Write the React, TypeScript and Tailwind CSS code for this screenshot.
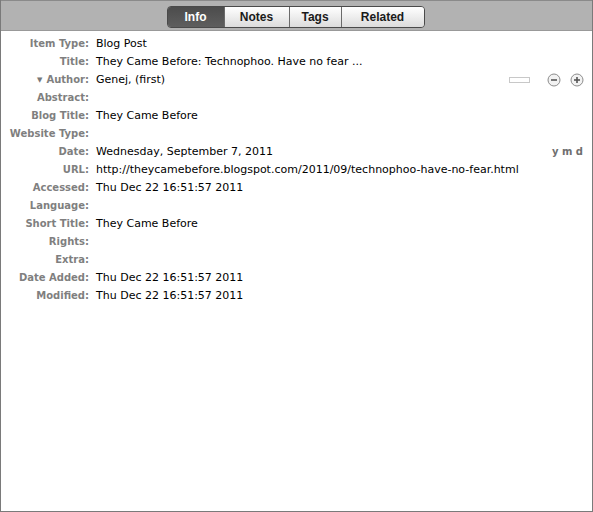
const rows: { label: string; value?: string; author?: boolean; date?: boolean }[] = [
  { label: "Item Type", value: "Blog Post" },
  { label: "Title", value: "They Came Before: Technophoo. Have no fear ..." },
  { label: "Author", value: "Genej, (first)", author: true },
  { label: "Abstract" },
  { label: "Blog Title", value: "They Came Before" },
  { label: "Website Type" },
  { label: "Date", value: "Wednesday, September 7, 2011", date: true },
  { label: "URL", value: "http://theycamebefore.blogspot.com/2011/09/technophoo-have-no-fear.html" },
  { label: "Accessed", value: "Thu Dec 22 16:51:57 2011" },
  { label: "Language" },
  { label: "Short Title", value: "They Came Before" },
  { label: "Rights" },
  { label: "Extra" },
  { label: "Date Added", value: "Thu Dec 22 16:51:57 2011" },
  { label: "Modified", value: "Thu Dec 22 16:51:57 2011" },
];

const tabs = ["Info", "Notes", "Tags", "Related"];
const tabWidths = ["w-[56px]", "w-[65px]", "w-[52px]", "w-[83px]"];

const CircleButton = ({ plus }: { plus?: boolean }) => (
  <svg width="14" height="14" viewBox="0 0 14 14">
    <circle cx="7" cy="7" r="6" fill="#f2f2f2" stroke="#8c8c8c" strokeWidth="1" />
    <path d="M4 7h6" stroke="#555" strokeWidth="1.6" />
    {plus && <path d="M7 4v6" stroke="#555" strokeWidth="1.6" />}
  </svg>
);

const App = () => {
  return (
    <div
      className="w-[593px] h-[512px] flex flex-col bg-white border-x border-b border-[#7a7a7a] overflow-hidden"
      style={{ fontFamily: '"Liberation Sans", Arial, sans-serif' }}
    >
      {/* TOP BAR WITH TABS */}
      <div className="h-[31px] shrink-0 flex justify-center items-start pt-[5px] bg-[#b2b2b2] border-t border-[#8a8a8a] border-b border-b-[#999]">
        <div className="flex h-[22px] rounded-[4px] border border-[#4a4a4a] overflow-hidden ml-[-2px]">
          {tabs.map((tab, index) => (
            <div
              key={tab}
              className={
                index === 0
                  ? `${tabWidths[index]} flex justify-center items-center text-[12px] font-bold text-white bg-gradient-to-b from-[#4c4c4c] to-[#5e5e5e]`
                  : `${tabWidths[index]} flex justify-center items-center text-[12px] font-bold text-[#1a1a1a] bg-gradient-to-b from-[#ffffff] to-[#dcdcdc] border-l border-[#6a6a6a]`
              }
            >
              {tab}
            </div>
          ))}
        </div>
      </div>

      {/* FIELDS */}
      <div className="flex flex-col pt-[4px] font-['DejaVu_Sans',sans-serif]">
        {rows.map((row) => (
          <div key={row.label} className="flex items-baseline h-[18px] leading-[18px]">
            <div className="w-[88px] shrink-0 flex justify-end items-baseline gap-[4px] text-[10px] font-bold text-[#7f7f7f]">
              {row.author && <span className="relative top-[-1px] text-[7px] text-[#777]">▼</span>}
              <span>{row.label}:</span>
            </div>
            <div className="pl-[7px] flex-1 text-[11px] text-black whitespace-nowrap">{row.value}</div>
            {row.author && (
              <div className="self-center flex items-center gap-[9px] pr-[8px]">
                <div className="w-[21px] h-[6px] border border-[#c8c8c8] bg-white mr-[8px]" />
                <CircleButton />
                <CircleButton plus />
              </div>
            )}
            {row.date && (
              <div className="pr-[9px] text-[10px] font-bold text-[#6f6f6f]">y m d</div>
            )}
          </div>
        ))}
      </div>
    </div>
  );
};

export default App;
